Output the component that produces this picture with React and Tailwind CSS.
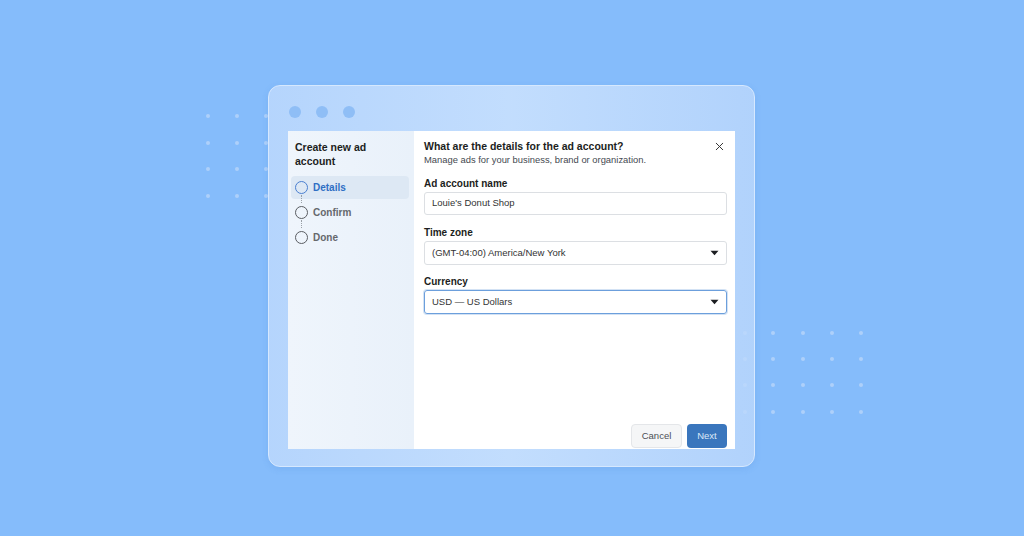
import { X } from 'lucide-react'

const leftDots = { xs: [208, 237, 266], ys: [116, 143, 169, 196] }
const rightDots = { xs: [745, 773, 803, 832, 861], ys: [333, 359, 385, 412] }

function DotGrid({ xs, ys }) {
  return (
    <>
      {ys.map((y) =>
        xs.map((x) => (
          <span
            key={`${x}-${y}`}
            className="absolute h-[4px] w-[4px] rounded-full bg-[#aed0fa]"
            style={{ left: x - 2, top: y - 2 }}
          />
        ))
      )}
    </>
  )
}

function Step({ label, active }) {
  return (
    <div className={`flex h-[23px] items-center gap-[5px] rounded-[4px] pl-[4px] ${active ? 'bg-[#dde8f4]' : ''}`}>
      <span className={`h-[13px] w-[13px] rounded-full border-[1.5px] ${active ? 'border-[#4a7fd0]' : 'border-[#5a5d62]'}`} />
      <span className={`text-[10px] font-bold ${active ? 'text-[#2f6fc4]' : 'text-[#65686c]'}`}>{label}</span>
    </div>
  )
}

function Caret() {
  return (
    <svg width="9" height="6" viewBox="0 0 9 6" className="text-[#1c1e21]">
      <path d="M0.5 0.8h8L4.5 5.2z" fill="currentColor" />
    </svg>
  )
}

export default function App() {
  return (
    <div className="relative h-[536px] w-[1024px] overflow-hidden bg-[#85bcfb] font-['Liberation_Sans',Arial,sans-serif] text-[#1c1e21]">
      <DotGrid {...leftDots} />
      <DotGrid {...rightDots} />
      <div className="relative pl-[268px] pt-[85px]">
        <div className="flex h-[382px] w-[487px] flex-col rounded-[12px] border border-[#d6e8fe] bg-gradient-to-r from-[#c1dbfd]/80 via-[#cde3fe]/85 to-[#bcd8fc]/80 px-[19px] pb-[17px] shadow-[0_2px_6px_rgba(60,120,200,0.15)]">
          <div className="flex h-[45px] items-center gap-[15px] pl-[1px] pt-[6px]">
            <span className="h-[12px] w-[12px] rounded-full bg-[#8fbef6]" />
            <span className="h-[12px] w-[12px] rounded-full bg-[#8fbef6]" />
            <span className="h-[12px] w-[12px] rounded-full bg-[#8fbef6]" />
          </div>
          <div className="flex flex-1">
            <div className="flex w-[126px] flex-col bg-gradient-to-r from-[#eff5fc] to-[#e9f1fa] pl-[3px] pr-[5px] pt-[9px]">
              <div className="px-[4px] text-[10.5px] font-bold leading-[14px] text-[#1c1e21]">
                Create new ad
                <br />
                account
              </div>
              <div className="relative mt-[8px] flex flex-col gap-[2px]">
                <span className="absolute left-[10px] top-[19px] h-[8px] border-l border-dotted border-[#9aa0a6]" />
                <span className="absolute left-[10px] top-[44px] h-[8px] border-l border-dotted border-[#9aa0a6]" />
                <Step label="Details" active />
                <Step label="Confirm" />
                <Step label="Done" />
              </div>
            </div>
            <div className="flex flex-1 flex-col bg-white pl-[10px] pr-[8px] pt-[8px]">
              <div className="flex items-start justify-between">
                <div>
                  <div className="text-[10.5px] font-bold leading-[14px]">What are the details for the ad account?</div>
                  <div className="text-[9.4px] leading-[13px] text-[#444950]">Manage ads for your business, brand or organization.</div>
                </div>
                <X size={13} strokeWidth={1.8} className="mr-[1px] mt-[1px] text-[#333]" />
              </div>
              <div className="mt-[11px] text-[10px] font-bold leading-[13px]">Ad account name</div>
              <div className="mt-[2px] flex h-[23px] items-center rounded-[3px] border border-[#dcdfe3] px-[7px] text-[9.5px] text-[#333]">
                Louie's Donut Shop
              </div>
              <div className="mt-[11px] text-[10px] font-bold leading-[13px]">Time zone</div>
              <div className="mt-[2px] flex h-[24px] items-center justify-between rounded-[3px] border border-[#dcdfe3] px-[7px] text-[9.5px] text-[#333]">
                (GMT-04:00) America/New York
                <Caret />
              </div>
              <div className="mt-[10px] text-[10px] font-bold leading-[13px]">Currency</div>
              <div className="mt-[2px] flex h-[24px] items-center justify-between rounded-[3px] border border-[#6c9fdc] px-[7px] text-[9.5px] text-[#333] shadow-[0_0_0_1px_rgba(108,159,220,0.3)]">
                USD — US Dollars
                <Caret />
              </div>
              <div className="mt-auto mb-[1px] flex justify-end gap-[5px]">
                <button className="h-[24px] w-[51px] rounded-[4px] border border-[#e4e6e9] bg-[#f5f6f7] text-[9.5px] text-[#4b4f56]">Cancel</button>
                <button className="h-[24px] w-[40px] rounded-[4px] bg-[#3a76bd] text-[9.5px] text-[#dbe8f8]">Next</button>
              </div>
            </div>
          </div>
        </div>
      </div>
    </div>
  )
}
